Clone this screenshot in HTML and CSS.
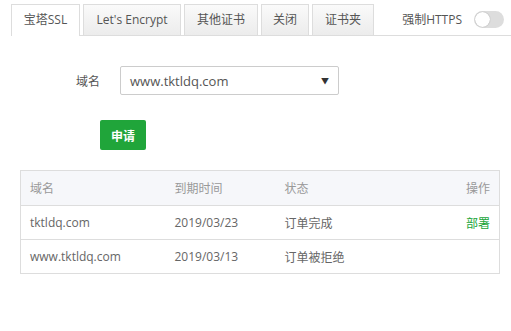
FILE: index.html
```html
<!DOCTYPE html>
<html lang="zh-CN">
<head>
    <meta charset="UTF-8">
    <title>SSL</title>
    <link rel="stylesheet" href="styles.css">
</head>
<body>
    <div class="panel">
        <div class="tab-bar">
            <div class="tabs">
                <span class="tab active">宝塔SSL</span>
                <span class="tab">Let's Encrypt</span>
                <span class="tab">其他证书</span>
                <span class="tab">关闭</span>
                <span class="tab">证书夹</span>
            </div>
            <div class="force-https">
                <span>强制HTTPS</span>
                <span class="switch"><span class="knob"></span></span>
            </div>
        </div>

        <div class="form-row">
            <span class="label">域名</span>
            <div class="select">
                <span>www.tktldq.com</span>
                <span class="arrow">▼</span>
            </div>
        </div>
        <div class="btn-row">
            <button class="btn-apply">申请</button>
        </div>

        <table class="cert-table">
            <thead>
                <tr>
                    <th class="col-domain">域名</th>
                    <th class="col-date">到期时间</th>
                    <th class="col-status">状态</th>
                    <th class="col-op">操作</th>
                </tr>
            </thead>
            <tbody>
                <tr>
                    <td>tktldq.com</td>
                    <td>2019/03/23</td>
                    <td>订单完成</td>
                    <td class="col-op"><a class="link">部署</a></td>
                </tr>
                <tr>
                    <td>www.tktldq.com</td>
                    <td>2019/03/13</td>
                    <td>订单被拒绝</td>
                    <td class="col-op"></td>
                </tr>
            </tbody>
        </table>
    </div>
</body>
</html>
```

FILE: styles.css
```css
* {
    margin: 0;
    padding: 0;
    box-sizing: border-box;
}
body {
    background: #fff;
    font-family: "Open Sans", "Noto Sans CJK SC", sans-serif;
    font-size: 12px;
    color: #555;
}
.panel {
    padding: 4px 0 0 11px;
}

/* Tabs */
.tab-bar {
    display: flex;
    justify-content: space-between;
    border-bottom: 1px solid #ddd;
    height: 32px;
}
.tabs {
    display: flex;
    gap: 3px;
}
.tab {
    height: 31px;
    line-height: 30px;
    border: 1px solid #ddd;
    border-bottom: none;
    background: linear-gradient(#fafafa, #ececec);
    color: #555;
    text-align: center;
}
.tab:nth-child(1) { width: 69px; }
.tab:nth-child(2) { width: 98px; }
.tab:nth-child(3) { width: 74px; }
.tab:nth-child(4) { width: 48px; }
.tab:nth-child(5) { width: 62px; }
.tab.active {
    background: #fff;
    height: 32px;
}
.force-https {
    display: flex;
    align-items: flex-start;
    gap: 12px;
    padding: 6px 7px 0 0;
    color: #555;
}
.switch {
    position: relative;
    width: 30px;
    height: 17px;
    margin-top: 1px;
    border-radius: 9px;
    background: #ddd;
}
.knob {
    position: absolute;
    left: 1px;
    top: 1px;
    width: 15px;
    height: 15px;
    border-radius: 50%;
    background: #fff;
    box-shadow: 0 0 1px rgba(0, 0, 0, 0.4);
}

/* Form */
.form-row {
    display: flex;
    align-items: center;
    margin-top: 30px;
}
.label {
    width: 109px;
    padding-left: 65px;
    color: #555;
}
.select {
    display: flex;
    justify-content: space-between;
    align-items: center;
    width: 219px;
    height: 29px;
    padding: 0 9px 0 9px;
    border: 1px solid #ccc;
    border-radius: 2px;
    font-size: 13px;
    color: #555;
}
.arrow {
    font-size: 8px;
    color: #333;
}
.btn-row {
    padding: 25px 0 0 89px;
}
.btn-apply {
    width: 46px;
    height: 30px;
    border: none;
    border-radius: 2px;
    background: #20a53a;
    color: #fff;
    font-family: "Noto Sans CJK SC", sans-serif;
    font-size: 12px;
    font-weight: bold;
}

/* Table */
.cert-table {
    margin: 20px 0 0 9px;
    width: 480px;
    border-collapse: collapse;
    border: 1px solid #ddd;
}
.cert-table th,
.cert-table td {
    text-align: left;
    padding: 0 9px;
    border-bottom: 1px solid #ddd;
}
.cert-table th {
    height: 35px;
    background: #f6f7fa;
    color: #999;
    font-weight: normal;
}
.cert-table td {
    height: 34px;
    color: #666;
}
.col-domain { width: 145px; }
.col-date { width: 110px; }
.cert-table .col-op {
    text-align: right;
}
.link {
    color: #20a53a;
}
```
